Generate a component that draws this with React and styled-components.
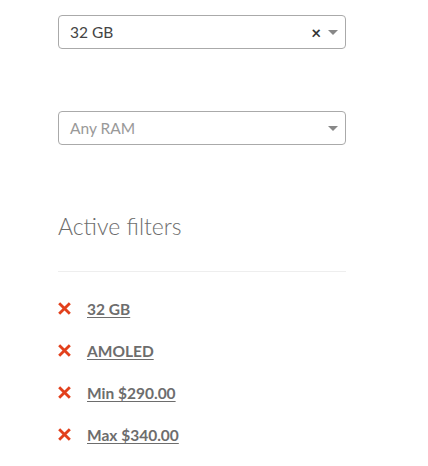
import React from "react";
import styled, { createGlobalStyle } from "styled-components";

const GlobalStyle = createGlobalStyle`
  body {
    margin: 0;
    background: #fff;
    font-family: "Lato", "Open Sans", sans-serif;
  }
`;

const filters = ["32 GB", "AMOLED", "Min $290.00", "Max $340.00"];

export default function App() {
  return (
    <>
      <GlobalStyle />
      <Sidebar>
        <Select>
          <SelectValue>32 GB</SelectValue>
          <Clear>×</Clear>
          <Arrow />
        </Select>
        <Select $spaced>
          <SelectValue $placeholder>Any RAM</SelectValue>
          <Arrow />
        </Select>
        <Heading>Active filters</Heading>
        <Divider />
        <FilterList>
          {filters.map((f) => (
            <FilterItem key={f}>
              <RemoveIcon viewBox="0 0 12 12">
                <path d="M2 2 L10 10 M10 2 L2 10" stroke="#e2401c" strokeWidth="2.6" strokeLinecap="square" />
              </RemoveIcon>
              <FilterLink href="#">{f}</FilterLink>
            </FilterItem>
          ))}
        </FilterList>
      </Sidebar>
    </>
  );
}

const Sidebar = styled.aside`
  width: 288px;
  padding: 15px 0 0 58px;
`;

const Select = styled.div`
  display: flex;
  align-items: center;
  box-sizing: border-box;
  height: 34px;
  border: 1px solid #aaa;
  border-radius: 4px;
  padding: 0 6px 0 11px;
  margin-top: ${(p) => (p.$spaced ? "62px" : "0")};
`;

const SelectValue = styled.span`
  flex: 1;
  font-size: 15.5px;
  color: ${(p) => (p.$placeholder ? "#999" : "#444")};
`;

const Clear = styled.span`
  font-size: 17px;
  font-weight: 700;
  color: #333;
  margin-right: 7px;
  line-height: 1;
`;

const Arrow = styled.span`
  width: 0;
  height: 0;
  border-left: 5px solid transparent;
  border-right: 5px solid transparent;
  border-top: 5px solid #888;
  margin-right: 1px;
`;

const Heading = styled.h3`
  margin: 65px 0 0;
  font-size: 23px;
  font-weight: 300;
  color: #6d6d6d;
  line-height: 32px;
`;

const Divider = styled.hr`
  border: 0;
  border-top: 1px solid #eee;
  margin: 29px 0 0;
`;

const FilterList = styled.ul`
  list-style: none;
  margin: 26px 0 0;
  padding: 0;
  display: flex;
  flex-direction: column;
  gap: 21px;
`;

const FilterItem = styled.li`
  display: flex;
  align-items: center;
  height: 21px;
`;

const RemoveIcon = styled.svg`
  width: 13px;
  height: 13px;
  margin-right: 16px;
`;

const FilterLink = styled.a`
  font-size: 15.5px;
  font-weight: 700;
  color: #6d6d6d;
  text-decoration: underline;
  text-underline-offset: 2px;
`;
